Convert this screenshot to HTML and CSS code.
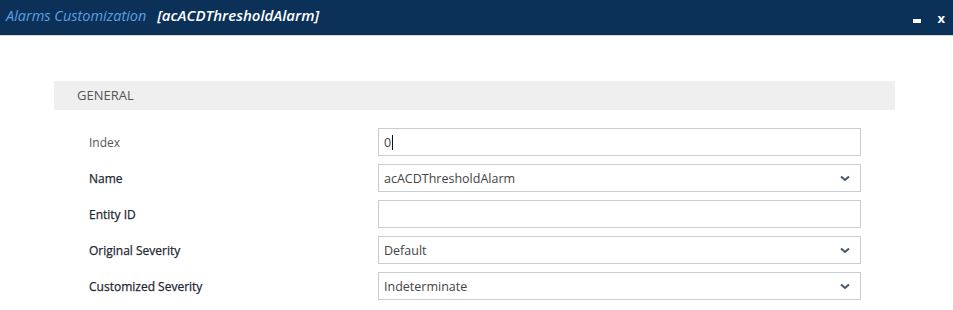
FILE: index.html
```html
<!DOCTYPE html>
<html lang="en">
<head>
    <meta charset="UTF-8">
    <meta name="viewport" content="width=device-width, initial-scale=1.0">
    <title>Alarms Customization</title>
    <link rel="stylesheet" href="styles.css">
</head>
<body>
    <div class="title-bar">
        <div class="title">
            <span class="title-main">Alarms Customization</span>
            <span class="title-item">[acACDThresholdAlarm]</span>
        </div>
        <div class="title-buttons">
            <span class="btn-min"></span>
            <span class="btn-close">x</span>
        </div>
    </div>

    <div class="content">
        <div class="section-header">GENERAL</div>

        <div class="form">
            <div class="form-row">
                <label class="label light">Index</label>
                <div class="field">0<span class="caret"></span></div>
            </div>
            <div class="form-row">
                <label class="label">Name</label>
                <div class="field select">acACDThresholdAlarm
                    <svg class="chevron" width="10" height="7" viewBox="0 0 10 7"><path d="M1 1.5 L5 5 L9 1.5" fill="none" stroke="#4a5563" stroke-width="2"/></svg>
                </div>
            </div>
            <div class="form-row">
                <label class="label">Entity ID</label>
                <div class="field"></div>
            </div>
            <div class="form-row">
                <label class="label">Original Severity</label>
                <div class="field select">Default
                    <svg class="chevron" width="10" height="7" viewBox="0 0 10 7"><path d="M1 1.5 L5 5 L9 1.5" fill="none" stroke="#4a5563" stroke-width="2"/></svg>
                </div>
            </div>
            <div class="form-row">
                <label class="label">Customized Severity</label>
                <div class="field select">Indeterminate
                    <svg class="chevron" width="10" height="7" viewBox="0 0 10 7"><path d="M1 1.5 L5 5 L9 1.5" fill="none" stroke="#4a5563" stroke-width="2"/></svg>
                </div>
            </div>
        </div>
    </div>
</body>
</html>
```
FILE: styles.css
```css
body {
    margin: 0;
    background-color: #fff;
    font-family: 'Open Sans', 'Noto Sans', sans-serif;
    color: #333;
}

/* Window title */
.title-bar {
    height: 35px;
    background-color: #0b3159;
    border-bottom: 1px solid #d6d6d6;
    display: flex;
    align-items: center;
    justify-content: space-between;
    padding: 0 8px 0 6px;
}

.title {
    font-size: 14.5px;
    font-style: italic;
    margin-top: -6px;
}

.title-main {
    color: #5e9ee0;
    margin-right: 7px;
}

.title-item {
    color: #fff;
    font-weight: 600;
    font-size: 15px;
}

.title-buttons {
    display: flex;
    align-items: center;
    gap: 16px;
    margin-top: 2px;
}

.btn-min {
    width: 8px;
    height: 4px;
    background-color: #fff;
    margin-top: 4px;
}

.btn-close {
    color: #fff;
    font-size: 13px;
    font-weight: 700;
    line-height: 1;
}

/* Content */
.content {
    padding: 45px 58px 0 54px;
}

.section-header {
    height: 29px;
    background-color: #efefef;
    color: #555;
    font-size: 13px;
    line-height: 29px;
    padding-left: 23px;
}

.form {
    padding: 18px 34px 0 35px;
    display: flex;
    flex-direction: column;
    gap: 8px;
}

.form-row {
    display: flex;
    align-items: center;
}

.label {
    width: 289px;
    font-size: 12px;
    color: #1e2833;
    -webkit-text-stroke: 0.25px #1e2833;
}

.label.light {
    color: #555;
    -webkit-text-stroke: 0;
}

.field {
    flex: 1;
    height: 26px;
    border: 1px solid #c9ccd1;
    box-sizing: content-box;
    display: flex;
    align-items: center;
    padding: 0 8px 0 5px;
    font-size: 12.5px;
    color: #444;
}

.select {
    justify-content: space-between;
}

.caret {
    display: inline-block;
    width: 1px;
    height: 15px;
    background-color: #111;
    margin-left: 1px;
}

.chevron {
    margin-right: 2px;
}
```
